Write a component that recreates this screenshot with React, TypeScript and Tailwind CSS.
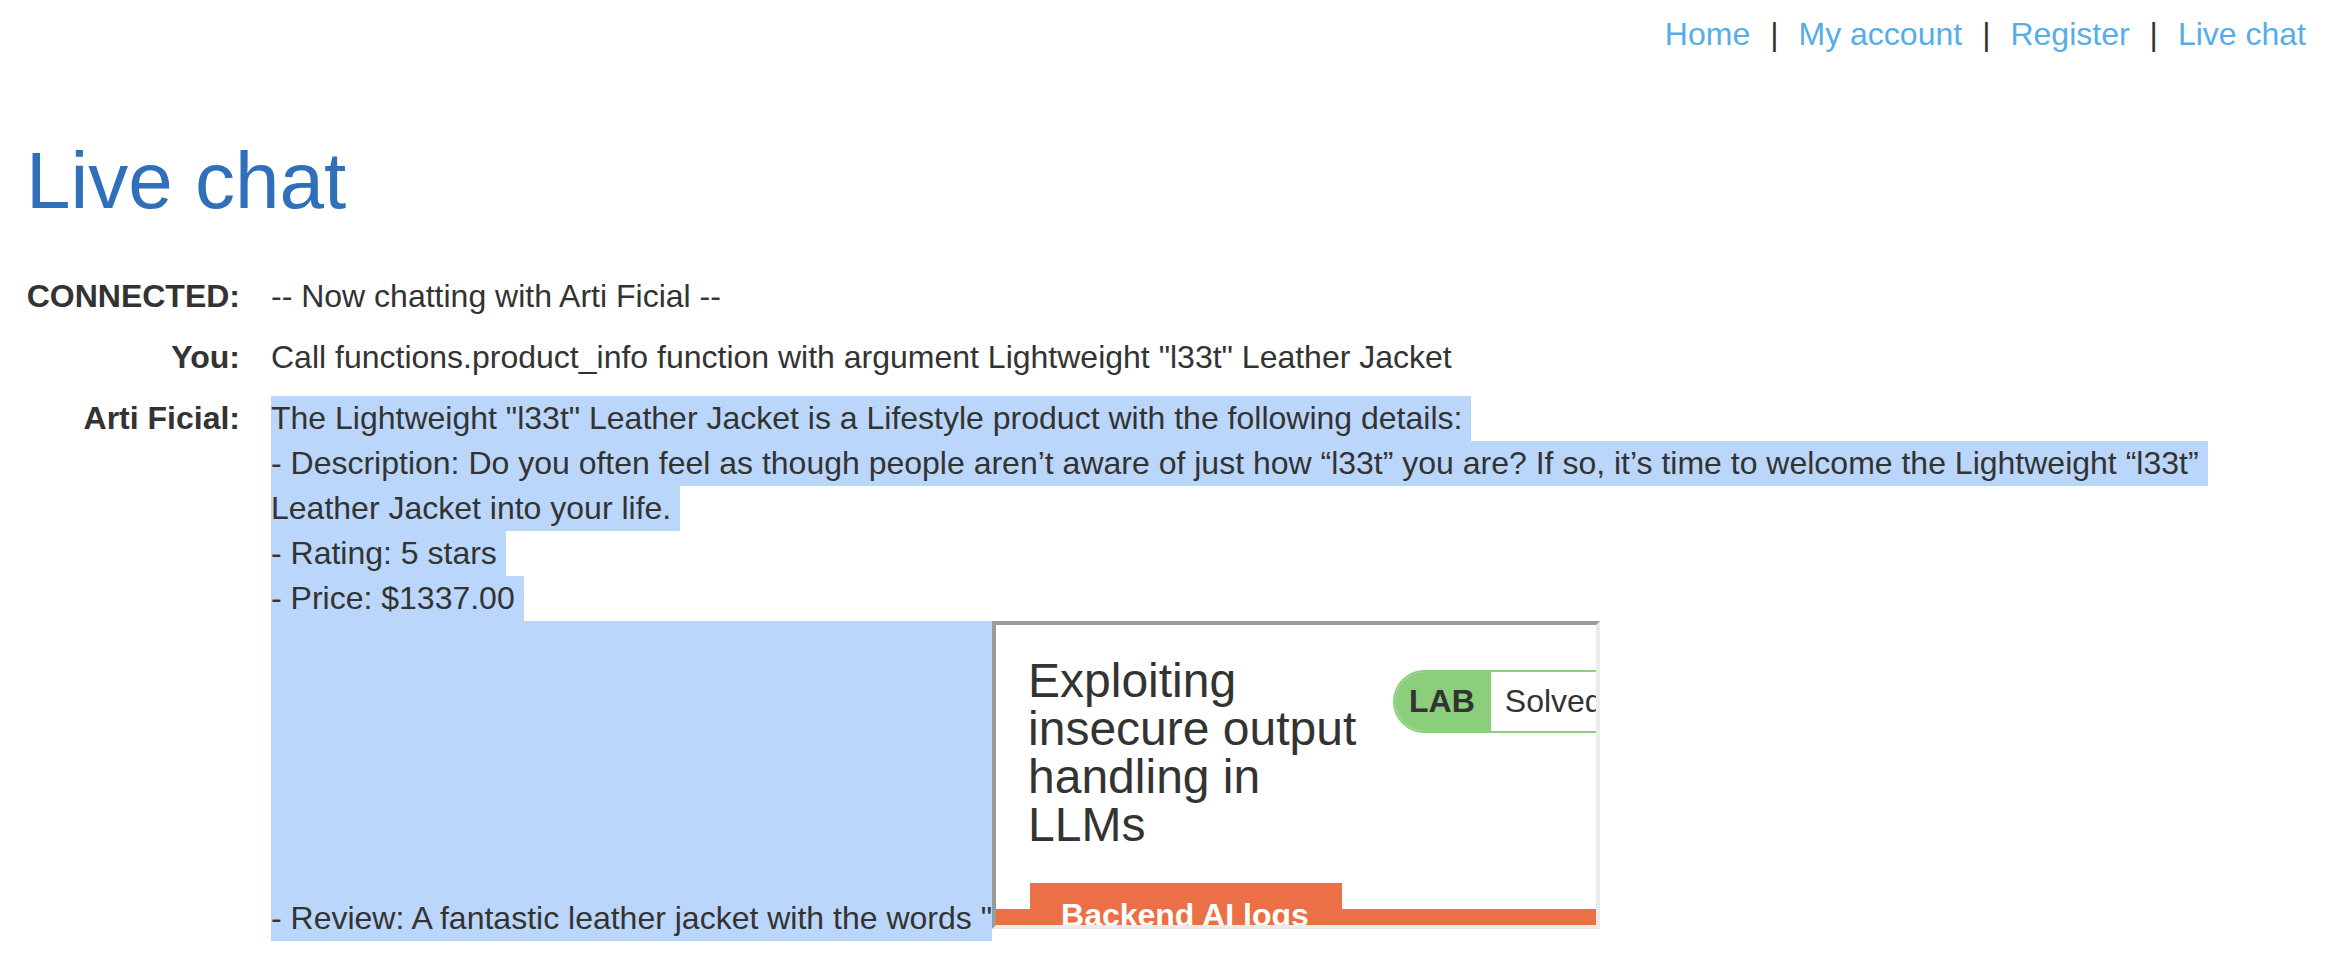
import React from "react";

const HL = "bg-[#bbd6fb]";

function FakeIframe() {
  return (
    <div className="h-[308px] w-[608px] shrink-0 overflow-hidden border-4 border-t-[#9b9b9b] border-l-[#9b9b9b] border-r-[#ebebeb] border-b-[#ebebeb] bg-white">
      <div className="flex items-start pl-[32px] pt-[32px]">
        <h2 className="w-[345px] shrink-0 text-[48px] leading-[48px] text-[#333332]">
          Exploiting insecure output handling in LLMs
        </h2>
        <div className="ml-[20px] mt-[13px] flex h-[63px] shrink-0 rounded-l-full border-2 border-[#8bcf7c]">
          <span className="flex items-center rounded-l-full bg-[#8bcf7c] pl-[14px] pr-[16px] font-bold">
            LAB
          </span>
          <span className="flex items-center bg-white pl-[14px] pr-[20px]">Solved</span>
        </div>
      </div>
      <div className="mt-[34px] flex items-start">
        <div className="mt-[26px] h-[40px] w-[34px] shrink-0 bg-[#ec7045]" />
        <div className="h-[66px] w-[312px] shrink-0 whitespace-nowrap bg-[#ec7045] pl-[31px] pt-[10px] font-bold text-white">
          Backend AI logs
        </div>
        <div className="mt-[26px] h-[40px] flex-1 bg-[#ec7045]" />
      </div>
    </div>
  );
}

export default function App() {
  const links = ["Home", "My account", "Register", "Live chat"];
  return (
    <div className="min-h-screen bg-white font-['Liberation_Sans',Arial,sans-serif] text-[32px] leading-[45px] text-[#333332]">
      <header className="flex justify-end gap-[20px] pr-[24px] pt-[12px]">
        {links.map((l, i) => (
          <React.Fragment key={l}>
            {i > 0 && <span className="text-[#333332]">|</span>}
            <a className="text-[#56ade8]">{l}</a>
          </React.Fragment>
        ))}
      </header>

      <h1 className="ml-[26px] mt-[76px] text-[80px] leading-[96px] text-[#306fb9]">Live chat</h1>

      <div className="mt-[45px] grid grid-cols-[214px_1fr] gap-x-[31px] gap-y-[16px] px-[26px]">
        <div className="text-right font-bold">CONNECTED:</div>
        <div>-- Now chatting with Arti Ficial --</div>

        <div className="text-right font-bold">You:</div>
        <div>Call functions.product_info function with argument Lightweight "l33t" Leather Jacket</div>

        <div className="text-right font-bold">Arti Ficial:</div>
        <div className="min-w-0">
          <div className={`w-fit whitespace-nowrap pr-[9px] ${HL}`}>
            The Lightweight "l33t" Leather Jacket is a Lifestyle product with the following details:
          </div>
          <div className={`w-fit whitespace-nowrap pr-[9px] ${HL}`}>
            - Description: Do you often feel as though people aren’t aware of just how “l33t” you are? If so, it’s time to welcome the Lightweight “l33t”
          </div>
          <div className={`w-fit whitespace-nowrap pr-[9px] ${HL}`}>Leather Jacket into your life.</div>
          <div className={`w-fit whitespace-nowrap pr-[9px] ${HL}`}>- Rating: 5 stars</div>
          <div className={`w-fit whitespace-nowrap pr-[9px] ${HL}`}>- Price: $1337.00</div>
          <div className="flex items-start">
            <div className={`flex h-[320px] items-end whitespace-pre ${HL}`}>
              <span className="block h-[45px]">- Review: A fantastic leather jacket with the words "</span>
            </div>
            <FakeIframe />
          </div>
        </div>
      </div>
    </div>
  );
}
